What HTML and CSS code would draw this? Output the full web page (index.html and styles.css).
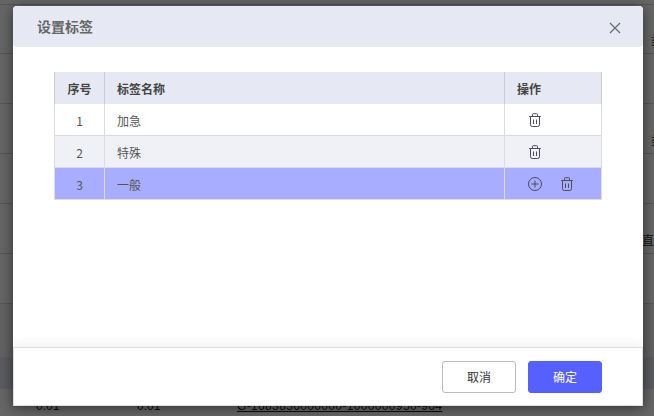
FILE: index.html
```
<!DOCTYPE html>
<html lang="zh">
<head>
<meta charset="utf-8">
<title>设置标签</title>
<link rel="stylesheet" href="styles.css">
</head>
<body>
<div class="page">
  <div class="bg-top"></div>
  <div class="bg-row first"></div>
  <div class="bg-row"></div>
  <div class="bg-row"></div>
  <div class="bg-row"></div>
  <div class="bg-row"></div>
  <div class="bg-row"></div>
  <div class="bg-gap"></div>
  <div class="bg-band"></div>
  <div class="bg-data">
    <span class="bg-c1">0.01</span>
    <span class="bg-c2">0.01</span>
    <span class="bg-link">G-1683836000000-1000000950-964</span>
  </div>
  <span class="bg-side1">类</span>
  <span class="bg-side2">类</span>
  <span class="bg-side3">直接</span>
</div>
<div class="overlay"></div>
<section class="modal">
  <header class="modal-head">
    <h2 class="modal-title">设置标签</h2>
    <svg class="close" width="12" height="12" viewBox="0 0 12 12"><path d="M1 1l10 10M11 1L1 11" stroke="#666a70" stroke-width="1.2" fill="none"/></svg>
  </header>
  <div class="modal-body">
    <table class="tags">
      <colgroup><col class="col-a"><col class="col-b"><col class="col-c"></colgroup>
      <thead>
        <tr><th class="num">序号</th><th>标签名称</th><th>操作</th></tr>
      </thead>
      <tbody>
        <tr>
          <td class="num">1</td><td>加急</td>
          <td><div class="ops"><svg class="icon" viewBox="0 0 14 14"><use href="#trash"/></svg></div></td>
        </tr>
        <tr class="alt">
          <td class="num">2</td><td>特殊</td>
          <td><div class="ops"><svg class="icon" viewBox="0 0 14 14"><use href="#trash"/></svg></div></td>
        </tr>
        <tr class="sel">
          <td class="num">3</td><td>一般</td>
          <td><div class="ops">
            <svg class="icon" viewBox="0 0 14 14"><circle cx="7" cy="7" r="6.5" fill="none" stroke="#4a4d63" stroke-width="1"/><path d="M3.5 7h7M7 3.5v7" stroke="#4a4d63" stroke-width="1" fill="none"/></svg>
            <svg class="icon" viewBox="0 0 14 14"><use href="#trash"/></svg>
          </div></td>
        </tr>
      </tbody>
    </table>
  </div>
  <footer class="modal-foot">
    <button class="btn">取消</button>
    <button class="btn primary">确定</button>
  </footer>
</section>
<svg class="defs" width="0" height="0">
  <symbol id="trash" viewBox="0 0 14 14">
    <path d="M1.2 3.5h11.6M2.5 3.5v8.2a1.8 1.8 0 0 0 1.8 1.8h5.4a1.8 1.8 0 0 0 1.8-1.8V3.5M4.5 3.5V1.4a.7.7 0 0 1 .7-.7h3.6a.7.7 0 0 1 .7.7v2.1M5.5 6.5v4.5M8.5 6.5v4.5" fill="none" stroke="#4d4f58" stroke-width="1"/>
  </symbol>
</svg>
</body>
</html>
```
FILE: styles.css
```
* { box-sizing: border-box; }
html, body { margin: 0; padding: 0; height: 100%; overflow: hidden; }
body {
  position: relative;
  width: 654px;
  height: 416px;
  font-family: "Noto Sans CJK SC", "Liberation Sans", sans-serif;
  font-size: 12px;
  color: #333;
}
.page {
  width: 654px;
  height: 416px;
  background: #fff;
  overflow: hidden;
}
.bg-top { height: 5px; border-bottom: 1px solid #d8d8d8; }
.bg-row { height: 50px; border-bottom: 1px solid #d8d8d8; }
.bg-row.first { height: 49px; }
.bg-gap { height: 53px; background: #f4f4f4; }
.bg-band { height: 32px; background: #e3e6f0; }
.bg-data {
  display: flex;
  height: 27px;
  font: 12px/18px "Liberation Sans", sans-serif;
  color: #222;
  padding: 8px 0 0 36px;
}
.bg-c1 { width: 101px; }
.bg-c2 { width: 100px; }
.bg-link { text-decoration: underline; letter-spacing: 0.35px; }
.bg-side1, .bg-side2, .bg-side3 { position: absolute; left: 651px; color: #333; white-space: nowrap; line-height: 18px; }
.bg-side1 { top: 31px; }
.bg-side2 { top: 131px; }
.bg-side3 { top: 231px; left: 642px; }
.overlay {
  position: absolute;
  inset: 0;
  background: rgba(0, 0, 0, 0.6);
}
.modal {
  position: absolute;
  left: 13px;
  top: 6px;
  width: 630px;
  height: 400px;
  background: #fff;
  border-radius: 4px;
  display: flex;
  flex-direction: column;
  box-shadow: 0 2px 14px rgba(0, 0, 0, 0.5);
}
.modal-head {
  height: 41px;
  flex: none;
  display: flex;
  align-items: center;
  justify-content: space-between;
  padding: 0 22px 0 24px;
  background: #e6e9f4;
  border-radius: 4px;
}
.modal-title { margin: 0 0 2px; font-size: 14px; line-height: 20px; font-weight: 700; color: #666; }
.close { display: block; margin-top: 3px; }
.modal-body { flex: 1; padding: 25px 41px 0; min-height: 0; }
.tags {
  width: 548px;
  border-collapse: separate;
  border-spacing: 0;
  table-layout: fixed;
  color: #555;
}
.col-a { width: 51px; }
.col-c { width: 97px; }
.tags th, .tags td {
  height: 32px;
  padding: 0 12px;
  border-right: 1px solid #dcdcdf;
  border-bottom: 1px solid #dcdcdf;
  text-align: left;
  font-size: 12px;
  font-weight: 400;
}
.tags td:not(:last-child) { padding-top: 2px; }
.tags th:first-child, .tags td:first-child { border-left: 1px solid #dcdcdf; }
.tags th {
  background: #e6e9f4;
  font-weight: 700;
  color: #444;
  border-bottom: 0;
  border-right-color: #ccc;
}
.tags th:first-child { border-left-color: #ccc; }
.tags .num { text-align: center; }
.alt td { background: #f0f1f6; }
.sel td { background: #a8adff; }
.ops { display: flex; align-items: center; gap: 18px; padding-left: 11px; }
.icon { width: 14px; height: 14px; display: block; }
.modal-foot {
  flex: none;
  height: 59px;
  display: flex;
  align-items: center;
  justify-content: flex-end;
  gap: 12px;
  padding: 0 40px 0 0;
  border: 1px solid #dedede;
  box-shadow: 0 -4px 9px rgba(0, 0, 0, 0.05);
  background: #fff;
}
.btn {
  width: 74px;
  height: 32px;
  font: inherit;
  font-size: 12px;
  color: #333;
  background: #fff;
  border: 1px solid #bbb;
  border-radius: 3px;
}
.btn.primary { background: #5560ff; border-color: #5560ff; color: #fff; }
.defs { position: absolute; }
```
